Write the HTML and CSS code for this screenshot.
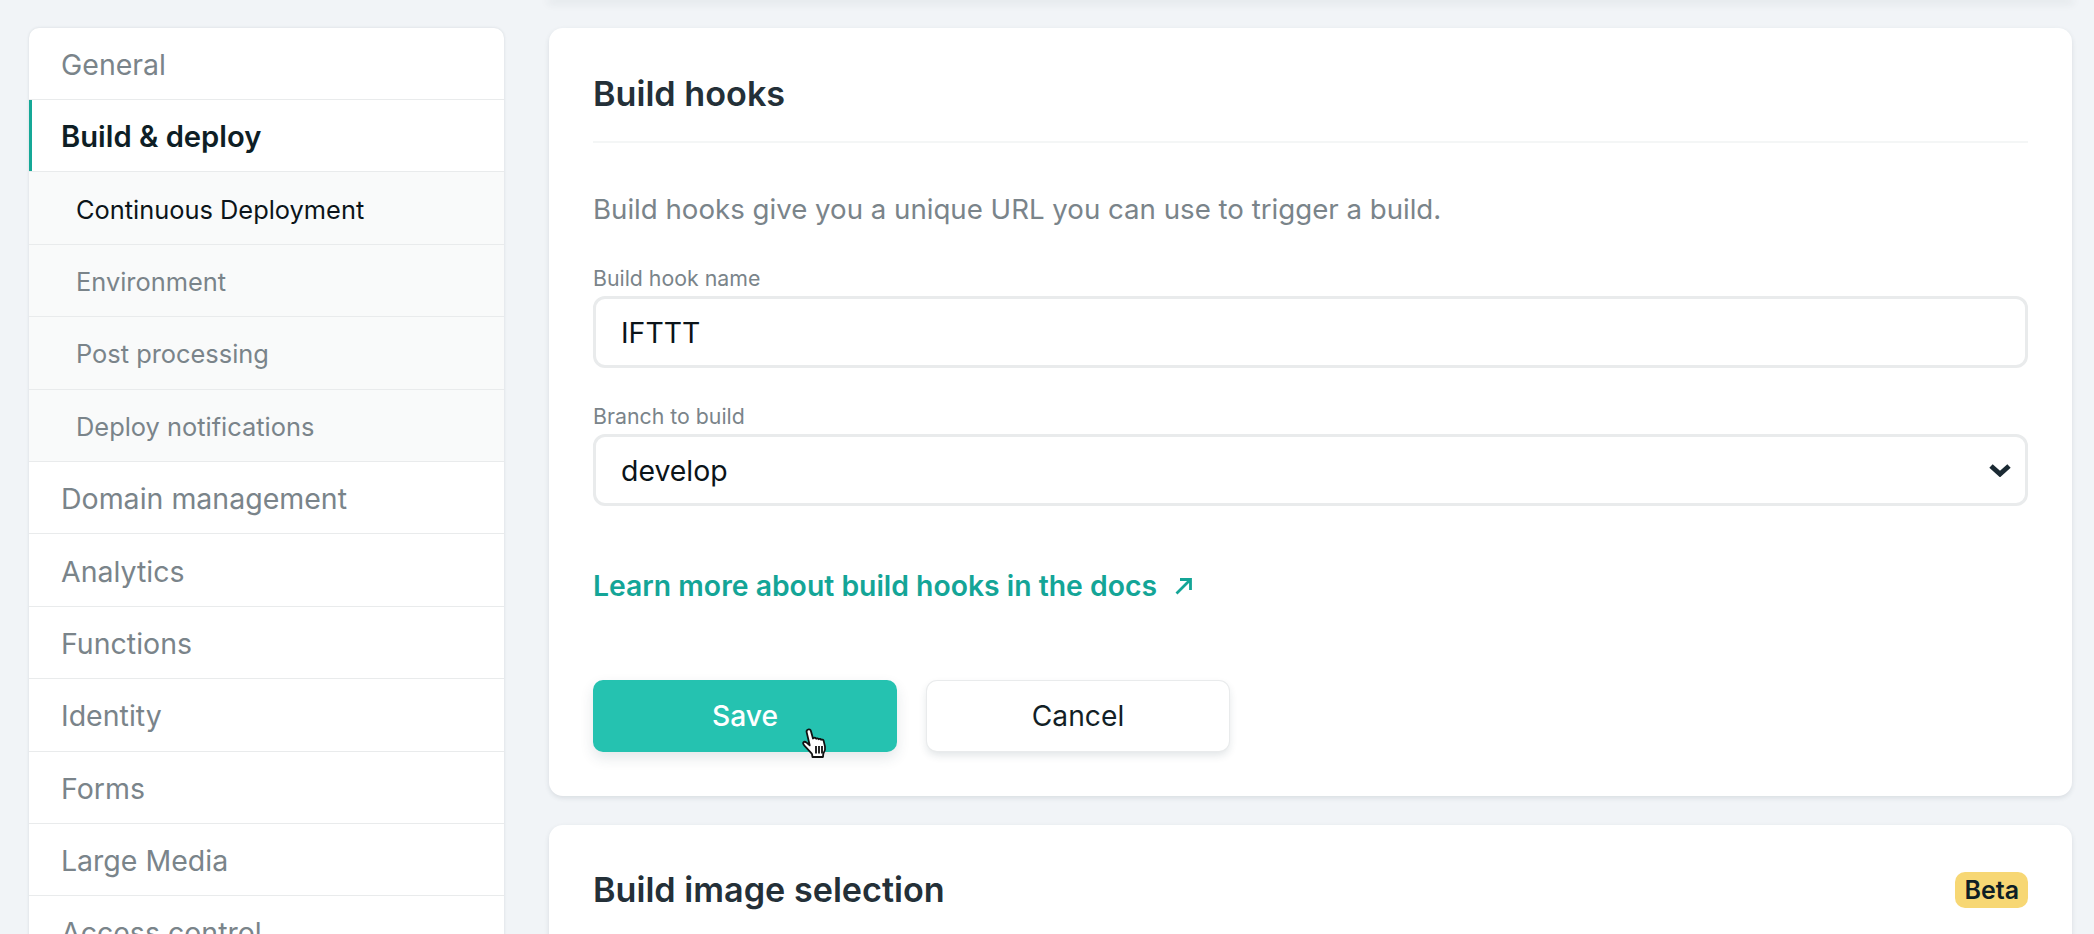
FILE: index.html
```html
<!DOCTYPE html>
<html lang="en">
<head>
<meta charset="utf-8">
<title>Build &amp; deploy settings</title>
<link rel="stylesheet" href="styles.css">
</head>
<body>
<div class="layout">
  <nav class="sidebar">
    <a class="item">General</a>
    <a class="item active">Build &amp; deploy</a>
    <a class="item sub current">Continuous Deployment</a>
    <a class="item sub">Environment</a>
    <a class="item sub">Post processing</a>
    <a class="item sub">Deploy notifications</a>
    <a class="item">Domain management</a>
    <a class="item">Analytics</a>
    <a class="item">Functions</a>
    <a class="item">Identity</a>
    <a class="item">Forms</a>
    <a class="item">Large Media</a>
    <a class="item">Access control</a>
  </nav>
  <main class="main">
    <div class="prev-card"></div>
    <section class="card">
      <h2 class="card-title ruled">Build hooks</h2>
      <p class="desc">Build hooks give you a unique URL you can use to trigger a build.</p>
      <div class="field">
        <label class="label">Build hook name</label>
        <div class="control">IFTTT</div>
      </div>
      <div class="field">
        <label class="label">Branch to build</label>
        <div class="control">
          <span>develop</span>
          <svg class="chevron" width="22" height="14" viewBox="0 0 22 14" aria-hidden="true"><path d="M2 3 11 11 20 3" fill="none" stroke="#1b2a33" stroke-width="5"/></svg>
        </div>
      </div>
      <a class="doc-link">Learn more about build hooks in the docs
        <svg class="arrow" width="18" height="18" viewBox="0 0 18 18" aria-hidden="true"><path d="M1.500 16.500 15.500 2.500M5 2.500H15.500V13" fill="none" stroke="#14a597" stroke-width="2.800"/></svg>
      </a>
      <div class="actions">
        <div class="btn primary">Save
          <svg class="cursor" width="28" height="32" viewBox="0 0 28 32" aria-hidden="true">
            <path d="M7 1.500c1.300-.6 2.500.2 2.900 1.500l2.100 7.500 1-.6c1-.5 1.800 0 2.200.8.800-.7 2-.5 2.500.5.900-.6 2.100-.3 2.500.6.900-.5 2-.2 2.400.8l1.400 6c.6 2.800-.2 5-1.700 7.100l-.3 3.300H11.500l-.5-3c-2-2.300-4.300-5-7.400-8.200-1.300-1.400-1.900-2.600-1.200-3.500.8-.9 2.300-.4 3.500.6l2.800 2.400L5.700 4.400C5.300 3.100 5.800 2 7 1.500z" fill="#fff" stroke="#111" stroke-width="1.800" stroke-linejoin="round"/>
            <path d="M15 18v7.500M18 18v7.500M21 18v7.500" stroke="#111" stroke-width="1.800"/>
          </svg>
        </div>
        <div class="btn secondary">Cancel</div>
      </div>
    </section>
    <section class="card next">
      <div class="card-head">
        <h2 class="card-title">Build image selection</h2>
        <span class="badge">Beta</span>
      </div>
    </section>
  </main>
</div>
</body>
</html>
```

FILE: styles.css
```css
* { box-sizing: border-box; }

html, body {
  margin: 0;
  height: 934px;
  overflow: hidden;
}

body {
  background: #f1f4f7;
  font-family: Inter, "Liberation Sans", sans-serif;
  color: #1b2a33;
}

.layout {
  display: flex;
  gap: 45px;
  padding: 0 22px 0 29px;
}

.sidebar {
  flex: 0 0 475px;
  margin-top: 28px;
  height: 1000px;
  display: flex;
  flex-direction: column;
  background: #fff;
  border-radius: 10px 10px 0 0;
  box-shadow: 0 0 3px rgba(40, 60, 70, 0.14);
  align-self: flex-start;
}

.item {
  flex: 0 0 72.400px;
  display: flex;
  align-items: center;
  padding: 2px 32px 0 32px;
  font-size: 28.500px;
  font-weight: 400;
  color: #7a848a;
  border-bottom: 1.500px solid #e9ebec;
}

.item:first-child { flex-basis: 72px; }

.item.active {
  font-size: 29.200px;
  font-weight: 600;
  color: #0e1e25;
  box-shadow: inset 3px 0 0 #15a897;
}

.item.sub {
  padding-left: 47px;
  font-size: 25.400px;
  background: #f9fafa;
}

.item.current { color: #0b1419; font-weight: 400; }

.main {
  flex: 1;
  min-width: 0;
  display: flex;
  flex-direction: column;
}

.prev-card {
  height: 0;
  margin-bottom: 28px;
  box-shadow: 0 1px 8px 1px rgba(40, 60, 70, 0.22);
}

.card {
  background: #fff;
  border-radius: 14px;
  padding: 0 44px;
  height: 768px;
  box-shadow: 0 2px 5px rgba(40, 60, 70, 0.12);
}

.card.next {
  margin-top: 29px;
  height: 300px;
}

.card-title {
  margin: 0;
  font-size: 34.200px;
  font-weight: 600;
  line-height: 40px;
  color: #243038;
}

.card-title.ruled {
  padding: 46px 0 46px;
  height: 115px;
  border-bottom: 2px solid #f4f6f6;
}

.desc {
  margin: 47px 0 0;
  font-size: 27.650px;
  line-height: 38px;
  color: #7a848a;
}

.field + .field { margin-top: 35px; }
.desc + .field { margin-top: 37px; }

.label {
  display: block;
  font-size: 21.300px;
  line-height: 26px;
  margin-bottom: 5px;
  color: #7a848a;
}

.control {
  height: 72px;
  display: flex;
  align-items: center;
  justify-content: space-between;
  padding: 0 14px 0 25px;
  border: 3.500px solid #e9ebec;
  border-radius: 12px;
  background: #fff;
  font-size: 28.400px;
  color: #0b1419;
}

.doc-link {
  display: flex;
  align-items: center;
  gap: 18px;
  margin-top: 60px;
  font-size: 28.350px;
  line-height: 40px;
  font-weight: 600;
  color: #14a597;
}

.actions {
  display: flex;
  gap: 30px;
  margin-top: 74px;
}

.btn {
  height: 72px;
  display: flex;
  align-items: center;
  justify-content: center;
  border-radius: 10px;
  font-size: 28.200px;
}

.primary {
  position: relative;
  width: 304px;
  background: #25c2b0;
  color: #fff;
  font-weight: 500;
  box-shadow: 0 6px 14px rgba(30, 60, 70, 0.12);
}

.secondary {
  width: 302px;
  height: 70px;
  margin-top: 1px;
  background: #fff;
  color: #131f26;
  box-shadow: 0 0 0 1px #e9ebec, 0 4px 8px rgba(30, 60, 70, 0.14);
}

.cursor {
  position: absolute;
  left: 208px;
  top: 48px;
}

.card-head {
  display: flex;
  justify-content: space-between;
  align-items: center;
  padding-top: 45px;
}

.badge {
  height: 36px;
  padding: 0 9px;
  display: flex;
  align-items: center;
  border-radius: 10px;
  background: #f7d774;
  font-size: 25px;
  font-weight: 600;
  color: #0e1e25;
}
```
